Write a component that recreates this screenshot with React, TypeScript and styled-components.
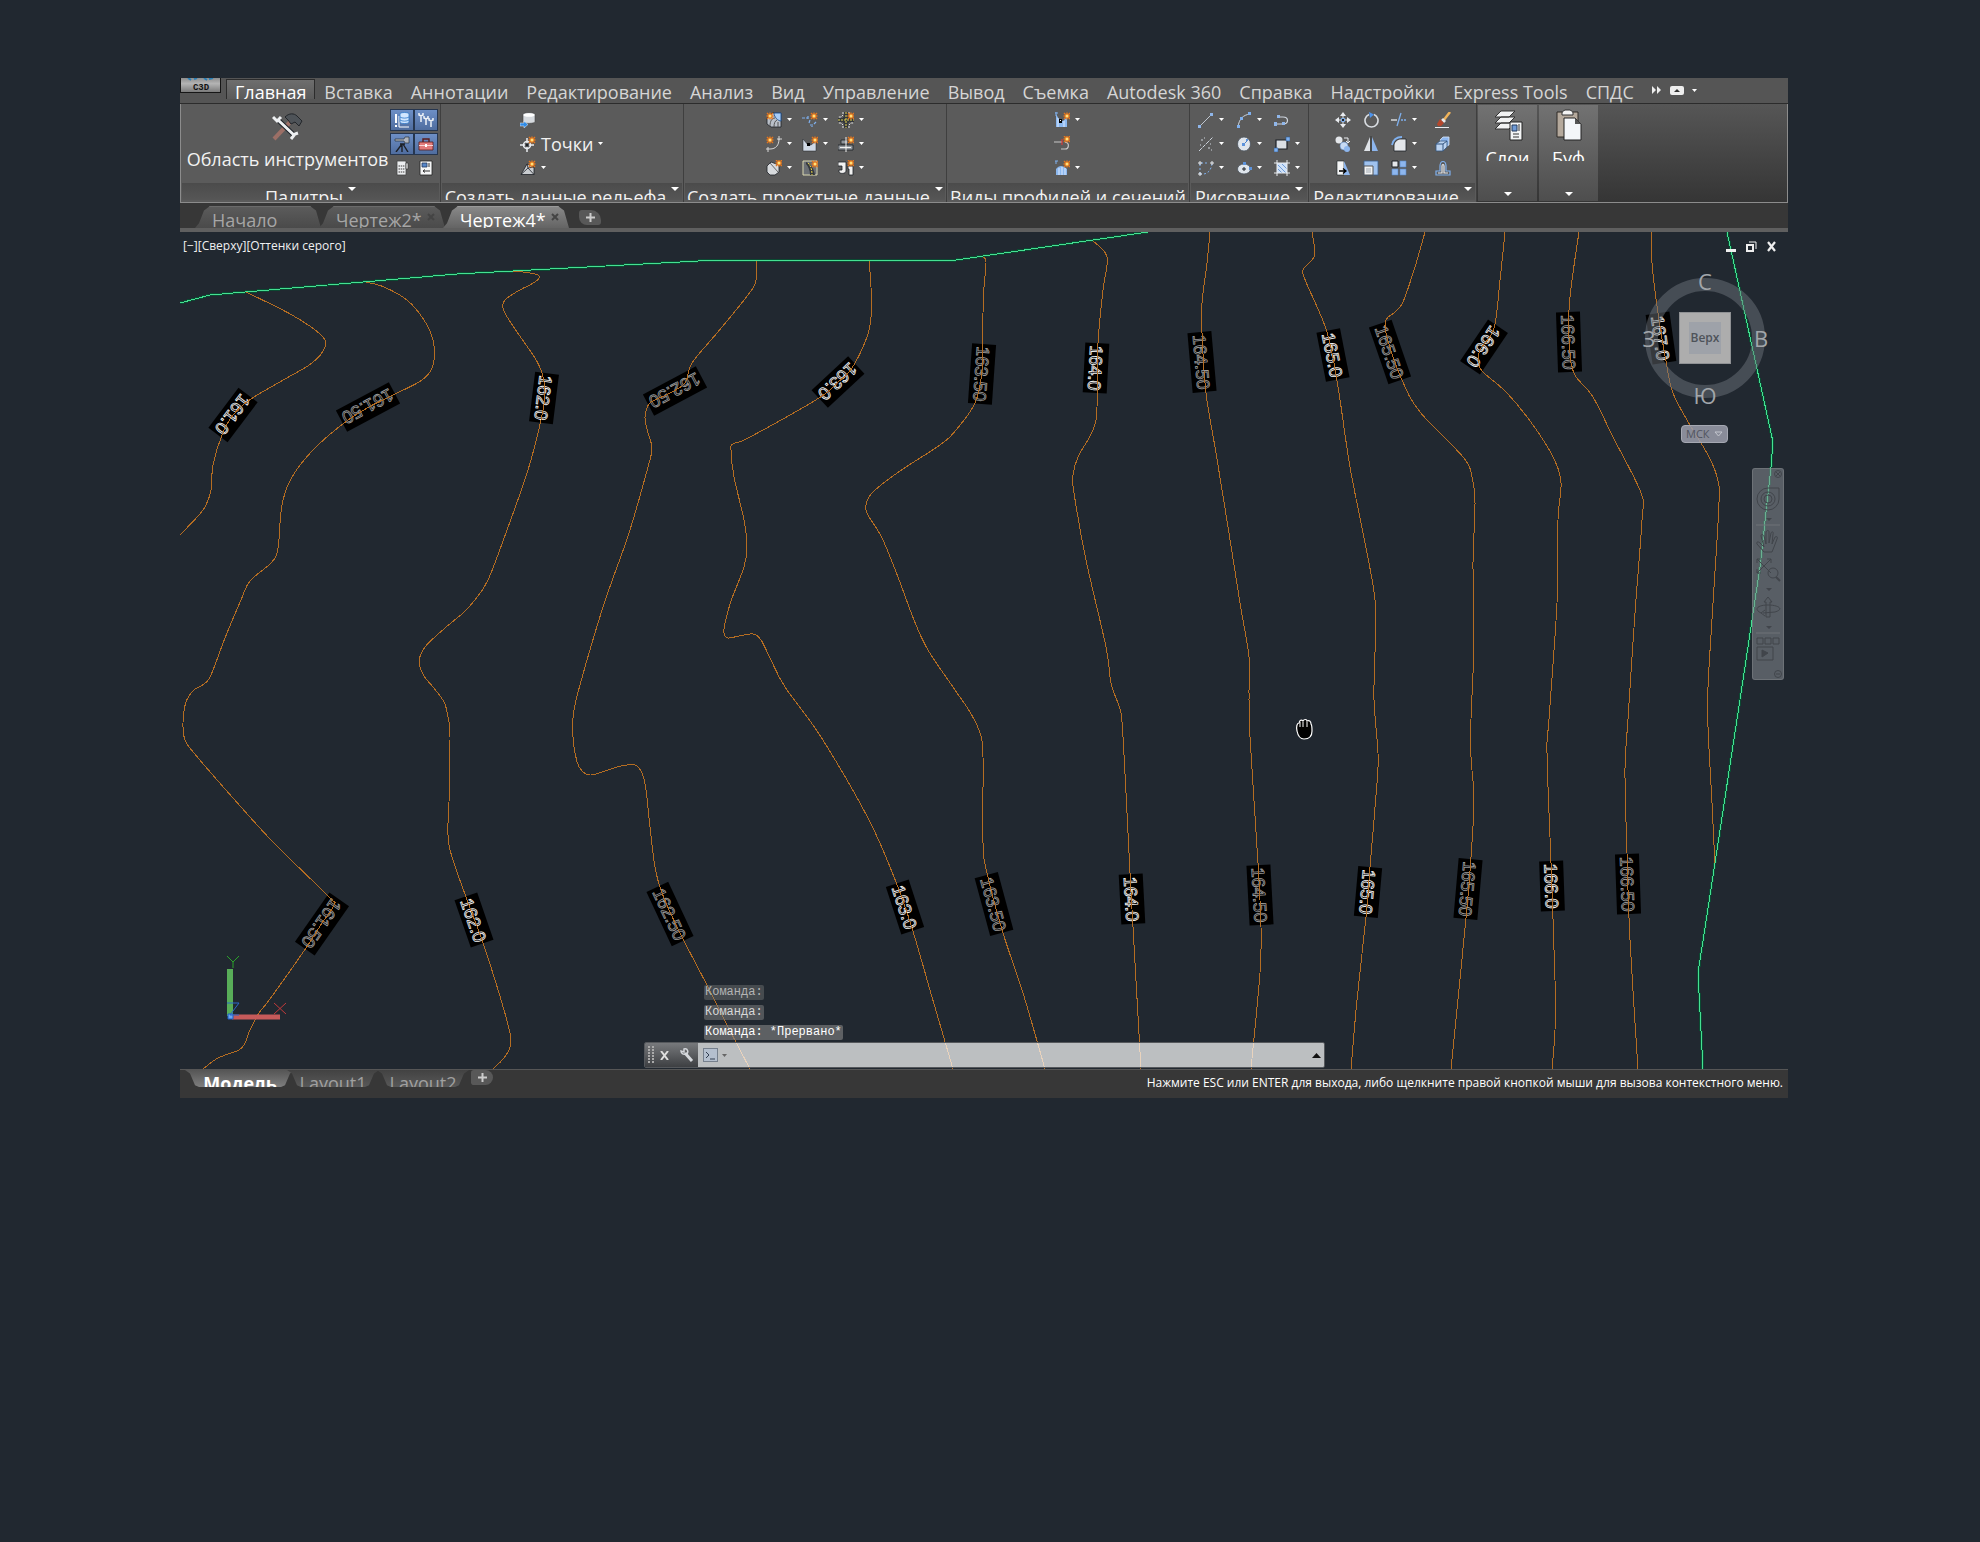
import React from 'react';
import styled, { createGlobalStyle, css } from 'styled-components';

const ui = `"Open Sans", "Noto Sans", sans-serif`;
const mono = `"Liberation Mono", "DejaVu Sans Mono", monospace`;

const Global = createGlobalStyle`
  * { box-sizing: border-box; }
  body { margin: 0; background: #212830; font-family: ${ui}; }
  button, input { font: inherit; color: inherit; border: 0; padding: 0; margin: 0; background: none; }
  svg { display: block; flex: none; }
`;

const Page = styled.div`
  min-height: 100vh;
  padding: 78px 192px 0 180px;
  background: #212830;
`;
const Window = styled.main`
  display: flex;
  flex-direction: column;
`;

/* ---------- ribbon tabs ---------- */
const TabRow = styled.nav`
  display: flex;
  align-items: stretch;
  height: 26px;
  background: #555;
  border-bottom: 1px solid #2c2c2c;
  overflow: hidden;
`;
const AppButton = styled.button`
  display: flex;
  flex: none;
  align-items: flex-end;
  justify-content: center;
  width: 41px;
  height: 15px;
  margin-right: 5px;
  border: 1px solid #161616;
  border-top: 0;
  background: linear-gradient(#8d8d8d, #b4b4b4 40%, #7a7a7a);
`;
const RibbonTab = styled.button<{ $active?: boolean }>`
  flex: none;
  height: 25px;
  padding: 1px 8px 0;
  border: 1px solid transparent;
  border-bottom: 0;
  color: #d6d6d6;
  font-size: 18px;
  line-height: 20px;
  white-space: nowrap;
  ${p => p.$active && css`
    height: 20px;
    margin-top: 1px;
    padding-top: 2px;
    color: #fff;
    border-color: #2c2c2c;
    background: linear-gradient(#6e6e6e, #5a5a5a);
  `}
`;
const TabExtras = styled.div`
  display: flex;
  align-items: center;
  gap: 8px;
  padding-left: 9px;
`;

/* ---------- ribbon ---------- */
const Ribbon = styled.section`
  display: flex;
  height: 99px;
  border: 1px solid #8c8c8c;
  border-top: 0;
  background: linear-gradient(#565656, #353535);
  overflow: hidden;
`;
const Panel = styled.section<{ $width: number }>`
  display: flex;
  flex: none;
  flex-direction: column;
  width: ${p => p.$width}px;
  border-right: 1px solid #3f3f3f;
  background: #5b5b5b;
`;
const PanelBody = styled.div`
  display: flex;
  align-items: center;
  justify-content: center;
  height: 79px;
`;
const PanelTitle = styled.h2`
  display: flex;
  justify-content: center;
  gap: 5px;
  height: 17px;
  margin: 0 1px;
  padding-top: 4px;
  background: linear-gradient(#4b4b4b, #565656);
  color: #f2f2f2;
  font-size: 18px;
  font-weight: 400;
  line-height: 20px;
  white-space: nowrap;
  overflow: hidden;
`;
const BigTool = styled.button`
  display: flex;
  flex-direction: column;
  align-items: center;
  gap: 6px;
  padding: 0 0 4px 4px;
  color: #f2f2f2;
  font-size: 18px;
  line-height: 24px;
  white-space: nowrap;
`;
const ToolPalette = styled.div`
  display: grid;
  grid-template-columns: 24px 24px;
  grid-auto-rows: 22px;
  row-gap: 2px;
  margin-left: 2px;
`;
const PaletteButton = styled.button<{ $on?: boolean }>`
  display: flex;
  align-items: center;
  justify-content: center;
  ${p => p.$on && css`
    border: 1px solid #26364f;
    background: linear-gradient(#6d8fc6, #4f6d9f);
  `}
`;
const ToolGrid = styled.div<{ $columns: string; $gap: number }>`
  display: grid;
  grid-template-columns: ${p => p.$columns};
  grid-auto-rows: 16px;
  gap: 8px ${p => p.$gap}px;
`;
const Tool = styled.button`
  display: flex;
  align-items: center;
  gap: 5px;
  height: 16px;
  color: #f2f2f2;
  font-size: 18px;
  line-height: 16px;
  white-space: nowrap;
`;
const Collapsed = styled.button`
  display: flex;
  flex: none;
  flex-direction: column;
  align-items: center;
  width: 59px;
  height: 96px;
  margin: 1px 1px 0;
  padding-top: 4px;
  background: linear-gradient(#727272, #4e4e4e);
  color: #fff;
  font-size: 18px;
`;
const CollapsedLabel = styled.span`
  height: 12px;
  margin: 8px 0 31px;
  line-height: 18px;
  overflow: hidden;
`;

/* ---------- file tabs ---------- */
const FileTabs = styled.nav`
  display: flex;
  align-items: flex-end;
  height: 29px;
  padding-left: 15px;
  background: #373737;
  border-bottom: 4px solid #5f5f5f;
  overflow: hidden;
`;
const FileTab = styled.button<{ $active?: boolean }>`
  display: flex;
  align-items: center;
  justify-content: space-between;
  width: 126px;
  height: 22px;
  margin-right: -2px;
  padding: 6px 10px 0 17px;
  background: ${p => (p.$active ? 'linear-gradient(#8a8a8a, #646464)' : 'linear-gradient(#5c5c5c, #4a4a4a)')};
  box-shadow: inset 0 1px 0 ${p => (p.$active ? '#9a9a9a' : '#6b6b6b')};
  color: ${p => (p.$active ? '#fff' : '#a6a6a6')};
  font-size: 18px;
  line-height: 20px;
  white-space: nowrap;
  overflow: hidden;
  clip-path: polygon(0 100%, 4px 78%, 9px 20%, 15px 0, 115px 0, 121px 20%, 126px 100%);
  svg { margin-bottom: 6px; }
`;
const PlusTab = styled.button<{ $flip?: boolean }>`
  display: flex;
  align-items: center;
  justify-content: center;
  align-self: ${p => (p.$flip ? 'flex-start' : 'center')};
  width: 22px;
  height: 15px;
  margin: ${p => (p.$flip ? '0 0 0 4px' : '4px 0 0 12px')};
  border-radius: ${p => (p.$flip ? '3px 8px 8px 3px' : '3px 10px 3px 8px')};
  background: #585858;
`;

/* ---------- drawing area ---------- */
const Canvas = styled.section`
  position: relative;
  overflow: hidden;
`;
const Plan = styled.svg`
  display: block;
  width: 100%;
  height: auto;
`;
const ViewLabel = styled.div`
  position: absolute;
  top: 6px;
  left: 3px;
  color: #f0f0f0;
  font-size: 12px;
  line-height: 16px;
`;
const ViewWindowButtons = styled.div`
  position: absolute;
  top: 9px;
  right: 11px;
  display: flex;
  gap: 9px;
`;
const CubeArea = styled.div`
  position: absolute;
  top: 35px;
  right: 16px;
  display: grid;
  grid-template-columns: 22px 90px 22px;
  grid-template-rows: 28px 86px 28px;
  place-items: center;
  width: 134px;
`;
const CubeRing = styled.div`
  position: absolute;
  top: 11px;
  left: 7px;
  width: 120px;
  height: 120px;
  border: 13px solid rgba(107, 113, 122, 0.5);
  border-radius: 50%;
`;
const Compass = styled.span<{ $area: string }>`
  position: relative;
  grid-area: ${p => p.$area};
  color: #a2a6aa;
  font-size: 22px;
  line-height: 28px;
`;
const Cube = styled.button`
  position: relative;
  grid-area: 2 / 2;
  width: 52px;
  height: 52px;
  border: 1px solid #8f9194;
  background: linear-gradient(#9ea2a9, #9ea2a9) center / 32px 32px no-repeat #adadad;
  color: #4e535a;
  font-size: 12px;
  font-weight: 600;
  line-height: 50px;
`;
const UcsPicker = styled.button`
  position: absolute;
  top: 193px;
  right: 60px;
  display: flex;
  align-items: center;
  justify-content: space-between;
  width: 47px;
  height: 18px;
  padding: 0 4px;
  border: 1px solid #a5a8b2;
  border-radius: 4px;
  background: rgba(155, 158, 172, 0.85);
  color: #50545e;
  font-size: 11px;
  line-height: 14px;
`;
const NavBar = styled.div`
  position: absolute;
  top: 236px;
  right: 4px;
  display: flex;
  flex-direction: column;
  align-items: center;
  width: 32px;
  height: 212px;
  border: 1px solid rgba(130, 133, 138, 0.5);
  border-radius: 3px;
  background: rgba(135, 139, 146, 0.55);
`;
const CommandArea = styled.div`
  position: absolute;
  left: 464px;
  bottom: 1px;
  display: flex;
  flex-direction: column;
  align-items: flex-start;
  gap: 5px;
  width: 681px;
`;
const History = styled.output<{ $tone: number }>`
  margin-left: 60px;
  padding: 0 1px;
  border-radius: 2px;
  background: rgba(128, 128, 128, ${p => 0.4 + p.$tone * 0.12});
  color: ${p => ['#b4b4b4', '#d8d8d8', '#fff'][p.$tone]};
  font-family: ${mono};
  font-size: 12px;
  line-height: 15px;
  white-space: pre;
`;
const CommandBar = styled.div`
  display: flex;
  width: 100%;
  height: 26px;
  margin-top: -3px;
  border: 1px solid #55585c;
  border-radius: 2px;
  overflow: hidden;
`;
const CommandGrip = styled.div`
  display: flex;
  flex: none;
  align-items: center;
  justify-content: space-between;
  width: 53px;
  padding: 0 4px 0 3px;
  background: linear-gradient(#77797c, #3d3f42);
`;
const GripStart = styled.div`
  display: flex;
  align-items: center;
  gap: 6px;
`;
const CommandField = styled.label`
  display: flex;
  flex: 1;
  align-items: center;
  gap: 4px;
  padding: 0 3px 0 5px;
  background: rgba(255, 255, 255, 0.7);
`;
const CommandInput = styled.input`
  flex: 1;
  min-width: 0;
  color: #222;
  font-family: ${mono};
  font-size: 12px;
  outline: none;
`;

/* ---------- status row ---------- */
const StatusRow = styled.footer`
  display: flex;
  justify-content: space-between;
  height: 29px;
  padding: 0 5px;
  border-top: 1px solid #565656;
  background: #373737;
`;
const LayoutTabs = styled.nav`
  display: flex;
  align-items: flex-start;
`;
const LayoutTab = styled.button<{ $active?: boolean }>`
  display: flex;
  justify-content: center;
  width: ${p => (p.$active ? 110 : 92)}px;
  height: 17px;
  margin-right: ${p => (p.$active ? -8 : -2)}px;
  padding-top: 3px;
  background: ${p => (p.$active ? 'linear-gradient(#555, #7e7e7e)' : 'linear-gradient(#424242, #585858)')};
  clip-path: polygon(0 0, 100% 0, calc(100% - 5px) 20%, calc(100% - 10px) 90%, calc(100% - 14px) 100%, 14px 100%, 10px 90%, 5px 20%);
  color: ${p => (p.$active ? '#fff' : '#a0a0a0')};
  font-size: 18px;
  font-weight: ${p => (p.$active ? 700 : 400)};
  line-height: 20px;
  overflow: hidden;
`;
const Hint = styled.p`
  margin: 0;
  color: #fff;
  font-size: 12px;
  line-height: 26px;
  white-space: nowrap;
`;

/* ---------- glyphs ---------- */
const Arrow = ({ w = 5, color = '#fff', up = false }: { w?: number; color?: string; up?: boolean }) => (
  <svg width={w} height={Math.ceil(w / 2)} viewBox="0 0 10 5" preserveAspectRatio="none">
    <path d={up ? 'M0 5h10L5 0z' : 'M0 0h10L5 5z'} fill={color} />
  </svg>
);
const Plus = () => (
  <svg width="9" height="9" viewBox="0 0 9 9"><path d="M4.500 0v9M0 4.500h9" stroke="#ccc" strokeWidth="2" /></svg>
);
const Spark = ({ x, y }: { x: number; y: number }) => (
  <g transform={`translate(${x} ${y})`}>
    <path d="M-3-3l6 6M3-3l-6 6M0-3.5v7M-3.5 0h7" stroke="#e5761c" strokeWidth="1.4" />
    <circle r="1.5" fill="#ffe07a" />
  </g>
);

const B = '#7fb0ee';
const W = '#e9ecf0';
const K = '#1d2127';
const icons: Record<string, React.ReactNode> = {
  survey: <><path d="M3 2.500c0-2.500 12-2.500 12 0v7c0 2.500-12 2.500-12 0z" fill="#d5d9de" stroke="#444" strokeWidth=".6" /><ellipse cx="9" cy="3" rx="5.500" ry="1.800" fill="#fff" /><path d="M0 11h4V9l4 3.500-4 3.500v-2H0z" fill="#2f8be6" stroke="#e8f2ff" strokeWidth=".5" /></>,
  points: <><circle cx="7" cy="9" r="3.500" fill="none" stroke={W} strokeWidth="1.500" /><path d="M7 2v5M7 11v5M0 9h5M9 9h5" stroke={W} strokeWidth="1.500" /><circle cx="7" cy="9" r="1.200" fill={K} /><Spark x={12} y={4} /></>,
  surface: <><path d="M1 14.500L7 4l7 3v7.500z" fill="#c9ccd0" stroke={K} strokeWidth=".8" /><path d="M1 14.500L8 8l6 6.500M8 8L7 4M8 8l6-1" stroke={K} strokeWidth=".8" fill="none" /><Spark x={12} y={4} /></>,
  parcel: <><path d="M1 6l5-5h9v14H5l-4-3z" fill="#b9bfc8" stroke={K} strokeWidth=".8" /><path d="M8 1h7v8c-3 0-7-4-7-8z" fill="#a9cdf6" stroke="#2d5b96" /><path d="M4 14c0-5 2-8 5-8M8 15c0-4 1-6 3-7M12 15v-5" stroke="#555" fill="none" /><Spark x={4} y={4} /></>,
  feature: <><path d="M0 6h3M4 6h2M8 8l-1 3M8 13h3M12 12l2-2M6 4v3M10 14v1" stroke={B} strokeWidth="1.200" /><Spark x={12} y={4} /></>,
  cross: <><path d="M5 5h6v6H5zM0 6h5v4H0zM11 6h5v4h-5zM6 0h4v5H6zM6 11h4v5H6z" fill="#34383d" /><path d="M5 0v3L3 5H0M11 0v3l2 2h3M5 16v-3l-2-2H0M11 16v-3l2-2h3" stroke="#e2e2e2" strokeDasharray="2 1" /><path d="M8 0v16M0 8h16" stroke="#e7d44c" strokeDasharray="2 1" /><Spark x={13} y={4} /></>,
  align: <><path d="M0 13h4c6 0 9-4 9-10M2 11v5M11 3h5M13 0v4" stroke="#d8d8d8" fill="none" /><Spark x={4} y={4} /></>,
  profile: <><path d="M1 3l5 6h3l5-4v10H1z" fill="#cfd8e4" stroke={K} strokeWidth=".5" /><path d="M5 7h3v3H5z" fill="#000" /><Spark x={13} y={4} /></>,
  assembly: <><path d="M3 4h7v4H3zM0 9h15v5H0z" fill="#8f949a" stroke={K} strokeWidth=".8" /><path d="M8 1v15M2 11.500h11" stroke="#f0f0f0" /><Spark x={13} y={4} /></>,
  grading: <><path d="M1 6l4-4 8 3v7l-4 3H4l-3-3z" fill="#d7dadd" stroke={K} strokeWidth=".8" /><path d="M4 3l8 9" stroke="#666" /><Spark x={13} y={3} /></>,
  corridor: <><path d="M1 1h14v14H1z" fill="#6b6f74" stroke="#dcd9b0" /><path d="M4 2c5 2 8 7 9 13H8c0-5-2-9-4-11z" fill="#34383d" /><path d="M6 3c3 3 4 7 4 12" stroke="#f1db45" strokeDasharray="2 1" fill="none" /><Spark x={13} y={4} /></>,
  pipe: <><path d="M0 2h8v9c0 3-6 3-7 1v-2h3V6H0zM10 6h5v9h-4V9h-1z" fill="#f1f1f1" stroke={K} strokeWidth=".8" /><Spark x={13} y={3} /></>,
  profileView: <><path d="M2 2v13h11V5L9 9H6z" fill="#8cb8ef" /><path d="M4 6v9M10 9v6" stroke="#dceaff" /><path d="M2 0v4M4 1H1" stroke={B} /><path d="M5 7h3v4H5z" fill="#000" /><path d="M6 8h1v1H6z" fill="#fff" /><Spark x={13} y={4} /></>,
  sampleLines: <><path d="M0 6h8M11 6c5 1 4 7 0 7H7" stroke="#c7c7c7" fill="none" strokeWidth="1.200" /><path d="M8 3v6" stroke="#e33" /><Spark x={13} y={3} /></>,
  sectionView: <><path d="M2 15V9c3-4 7-4 11 0v6z" fill="#8cb8ef" /><path d="M5 15V8M8 15V7M11 15V8" stroke="#dceaff" /><path d="M2 1v3M4 1H1" stroke={B} /><Spark x={13} y={4} /></>,
  line: <><path d="M1 15L14 2" stroke="#bfc6cf" /><path d="M0 13h3v3H0zM12 1h3v3h-3z" fill="#8fb6ea" /></>,
  arc: <><path d="M2 15C3 7 7 3 14 2" stroke="#cfd6df" fill="none" /><path d="M1 13h3v3H1zM4 5h3v3H4zM12 0h3v3h-3z" fill={B} /></>,
  polyline: <><path d="M2 12h7c6 0 6-7 0-7H4" stroke="#cfd6df" fill="none" strokeWidth="1.200" /><path d="M0 10h3v4H0zM8 10h3v3H8zM3 3h3v3H3z" fill="#8fb6ea" /></>,
  cline: <><path d="M1 15L15 1" stroke="#cfd6df" strokeDasharray="4 1" /><path d="M3 4h2M10 12h2M12 8h1M6 2h1M2 9h1M13 14h1" stroke="#cfd6df" /></>,
  circle: <><ellipse cx="8" cy="8" rx="6.500" ry="7" fill="#dfe5ec" stroke="#4d5560" strokeWidth=".8" /><path d="M8 8l3-3" stroke="#4c7fc2" /><path d="M6 7h3v3H6zM10 3h2v2h-2z" fill="#5d93db" /></>,
  rect: <><path d="M2 4h11v9H2z" fill="#d9dee4" stroke={K} strokeWidth="1.200" /><path d="M0 12h4v4H0zM12 1h4v4h-4z" fill="#7fb0ee" stroke="#2d5b96" strokeWidth=".6" /></>,
  fillet: <><path d="M2 14V3h8M2 14h3c5 0 8-4 9-10" stroke={B} strokeDasharray="2 2" fill="none" /><path d="M0 3h4M2 1v4M0 14h4M2 12v4M12 3h4M14 1v4" stroke={W} /></>,
  ellipse: <><ellipse cx="8" cy="9" rx="6.500" ry="5" fill="#dfe5ec" stroke="#4d5560" strokeWidth=".8" /><path d="M6 9h4M8 7v4" stroke={K} /><path d="M7 2h3v3H7zM13 7h3v3h-3z" fill="#5d93db" /></>,
  hatch: <><path d="M3 3h10v10H3z" fill="#cfe1f8" /><path d="M4 9l4 4M4 5l8 8M8 4l5 5" stroke="#6f9cd8" /><path d="M3 0v16M13 0v16M0 3h16M0 13h16" stroke={W} /></>,
  move: <><path d="M8 0l3 4H5zM8 16l3-4H5zM0 8l4-3v6zM16 8l-4-3v6z" fill={W} /><path d="M8 3v3M8 10v3M3 8h3M10 8h3" stroke={W} /><path d="M6.500 6.500h3v3h-3z" fill={K} stroke={B} /></>,
  rotate: <><path d="M11 2.500a6.500 6.500 0 1 1-5 0" stroke="#d9dde2" strokeWidth="1.600" fill="none" /><path d="M6 0l5 2.500L7 6z" fill="#4e94ec" /></>,
  trim: <><path d="M0 8h6" stroke={W} strokeWidth="1.300" /><path d="M10 8h6" stroke={B} strokeDasharray="2 1" strokeWidth="1.300" /><path d="M10 1L6 14" stroke={B} strokeWidth="1.300" /></>,
  erase: <><path d="M15 0L8 9" stroke="#f0b35a" strokeWidth="2.500" /><path d="M8 6l3 3-2 2-3-3z" fill="#e8e8e8" /><path d="M2 12l3-5 4 4-3 3H3z" fill="#b5472c" /><path d="M0 15.500h14" stroke={W} /></>,
  copy: <><circle cx="4" cy="4" r="3.500" fill="#e4e7eb" /><circle cx="9" cy="10" r="4" fill="#c7daf4" stroke="#4e7fc0" strokeWidth=".5" /><circle cx="12" cy="13" r="3" fill="#8db6ee" /><path d="M9 2h4v4M11 5l2 2 2-2" stroke={W} fill="none" /></>,
  mirror: <><path d="M7 1v14H1z" fill="#dfe3e8" /><path d="M9 1v14h6z" fill="#8db6ee" /><path d="M8 0v16" stroke={K} strokeWidth=".6" /></>,
  chamfer: <><path d="M3 15V9c0-3 4-6 6-6h6v12z" fill="#e4e7eb" stroke={K} strokeWidth=".8" /><path d="M1 9c1-5 4-8 10-8" stroke={B} strokeWidth="1.800" fill="none" /></>,
  explode: <><path d="M5 4l3-3h6v8l-4 2z" fill="#8db6ee" stroke="#d9e6f8" strokeWidth=".8" /><path d="M1 8l4-3h7v6l-4 4H1z" fill="#bcd3f0" stroke="#33557f" strokeWidth=".8" /><path d="M1 8h7v7M8 8l4-3" stroke="#33557f" fill="none" /></>,
  stretch: <><path d="M2 1h7v14H2z" fill="#f4f5f6" stroke={K} strokeWidth=".6" /><path d="M9 1l6 14H9z" fill="#8db6ee" /><path d="M4 11h6M8 8.500l3 2.500-3 2.500" stroke="#000" strokeWidth="1.300" fill="none" /></>,
  scale: <><path d="M1 1h14v14H1z" fill="#9fc2ef" stroke="#3b5f8f" strokeWidth=".8" /><path d="M1 6h9v9H1z" fill="#f0f2f4" stroke="#555" /><path d="M3 8h5v5H3z" fill="#c9cdd2" /></>,
  array: <><path d="M1 1h6v6H1z" fill="#e4e7eb" stroke={K} /><path d="M9 1h6v6H9zM1 9h6v6H1zM9 9h6v6H9z" fill="#8db6ee" stroke="#5b8ac8" strokeWidth=".6" /></>,
  offset: <><path d="M1 15h14v-4h-4V6c0-6-6-6-6 0v5H1z" fill="none" stroke={B} strokeWidth="1.200" /><path d="M3 13h4V6c0-2 2-2 2 0v7h4" stroke={W} strokeWidth="1.200" fill="none" /></>,
  toolspace: <><path d="M1 2h2v9H1zM1 13h2v2H1z" fill="#fff" /><path d="M5 4v11h10" stroke="#fff" fill="none" /><path d="M6 2c0-2 9-2 9 0v8c0 2-9 2-9 0z" fill="#d2e6ff" stroke="#2f78c9" strokeWidth=".8" /><path d="M6 5c2 1.500 7 1.500 9 0M6 8c2 1.500 7 1.500 9 0" stroke="#2f78c9" fill="none" strokeWidth=".8" /></>,
  wrenches: <path d="M1 1v2l2 1 2-1V1M3 4v6M6 4v2l2 1 2-1V4M8 7v6M11 6v2l2 1 2-1V6M13 9v6" stroke="#eef2f7" strokeWidth="1.500" fill="none" />,
  tripod: <><path d="M1 3h9l1-2h4v6h-4l-1-2H1z" fill="#aeb4bd" stroke={K} strokeWidth=".6" /><path d="M8 8l-6 8M8 8v8M9 8l5 8M6 8h5" stroke={K} strokeWidth="1.400" /></>,
  toolbox: <><path d="M1 6h14v8H1z" fill="#e07a7a" stroke="#5c1c1c" strokeWidth=".8" /><path d="M5 6V3h6v3" stroke="#5c1c1c" strokeWidth="1.400" fill="none" /><path d="M1 9.500h14" stroke="#f7d3d3" /><path d="M7 8h2v3H7z" fill="#fff" /></>,
  calc: <><path d="M3 1h9v14H3z" fill="#eceef0" stroke="#444" strokeWidth=".8" /><path d="M12 3h2v6h-2z" fill="#eee" stroke="#333" strokeWidth=".7" /><path d="M4.500 6h6M4.500 9h6M4.500 12h6" stroke="#777" strokeDasharray="1.500 .7" strokeWidth="1.500" /></>,
  props: <><path d="M2 1h12v14H2z" fill="#f4f5f6" stroke="#222" strokeWidth=".8" /><path d="M4 3h5v4H4z" fill="#5586c9" stroke="#23395a" strokeWidth=".8" /><path d="M11 3v4M5 11h7M7 9.500L5 11l2 1.500" stroke="#333" fill="none" /></>,
};
const Icon = ({ name }: { name: string }) => (
  <svg width="16" height="16" viewBox="0 0 16 16" fill="none">{icons[name]}</svg>
);

type Item = { icon: string; menu?: boolean; text?: string };
const ToolItem = ({ icon, menu, text }: Item) => (
  <Tool aria-label={text ? undefined : icon}>
    <Icon name={icon} />
    {text}
    {menu && <Arrow />}
  </Tool>
);
const RibbonPanel = ({ width, title, menu, children }: { width: number; title: string; menu?: boolean; children: React.ReactNode }) => (
  <Panel $width={width}>
    <PanelBody>{children}</PanelBody>
    <PanelTitle>{title}{menu && <Arrow w={8} />}</PanelTitle>
  </Panel>
);

const tabs = ['Главная', 'Вставка', 'Аннотации', 'Редактирование', 'Анализ', 'Вид', 'Управление', 'Вывод', 'Съемка', 'Autodesk 360', 'Справка', 'Надстройки', 'Express Tools', 'СПДС'];

const terrain: Item[] = [{ icon: 'survey' }, { icon: 'points', text: 'Точки', menu: true }, { icon: 'surface', menu: true }];
const design: Item[] = [
  { icon: 'parcel', menu: true }, { icon: 'feature', menu: true }, { icon: 'cross', menu: true },
  { icon: 'align', menu: true }, { icon: 'profile', menu: true }, { icon: 'assembly', menu: true },
  { icon: 'grading', menu: true }, { icon: 'corridor' }, { icon: 'pipe', menu: true },
];
const views: Item[] = [{ icon: 'profileView', menu: true }, { icon: 'sampleLines' }, { icon: 'sectionView', menu: true }];
const draw: Item[] = [
  { icon: 'line', menu: true }, { icon: 'arc', menu: true }, { icon: 'polyline' },
  { icon: 'cline', menu: true }, { icon: 'circle', menu: true }, { icon: 'rect', menu: true },
  { icon: 'fillet', menu: true }, { icon: 'ellipse', menu: true }, { icon: 'hatch', menu: true },
];
const modify: Item[] = [
  { icon: 'move' }, { icon: 'rotate' }, { icon: 'trim', menu: true }, { icon: 'erase' },
  { icon: 'copy' }, { icon: 'mirror' }, { icon: 'chamfer', menu: true }, { icon: 'explode' },
  { icon: 'stretch' }, { icon: 'scale' }, { icon: 'array', menu: true }, { icon: 'offset' },
];

/* ---------- plan data (drawing units) ---------- */
type Pt = [number, number];
const contours: Pt[][] = [
  [[246, 292], [292, 315], [321, 335], [325, 347], [312, 363], [285, 379], [251, 399], [233, 415], [222, 435], [213, 465], [211, 490], [206, 505], [199, 515], [180, 535]],
  [[366, 282], [384, 287], [407, 300], [424, 320], [433, 340], [434, 360], [430, 372], [419, 382], [393, 395], [369, 407], [344, 423], [313, 450], [292, 477], [283, 500], [280, 523], [278, 548], [272, 562], [250, 581], [241, 600], [225, 638], [211, 675], [204, 684], [194, 690], [186, 702], [183, 723], [185, 740], [194, 753], [233, 798], [273, 842], [328, 896], [334, 905], [322, 923], [306, 948], [270, 999], [259, 1013], [250, 1030], [245, 1043], [239, 1050], [218, 1058], [203, 1069]],
  [[513, 271], [530, 273], [539, 276], [535, 282], [518, 291], [505, 300], [503, 308], [509, 320], [524, 342], [535, 358], [542, 373], [545, 393], [541, 420], [528, 470], [507, 530], [488, 580], [474, 601], [463, 613], [445, 628], [425, 647], [419, 662], [424, 676], [433, 687], [444, 702], [448, 717], [450, 737], [449, 803], [449, 845], [466, 897], [482, 940], [499, 993], [510, 1033], [510, 1047], [504, 1058], [493, 1069]],
  [[756, 260], [756, 280], [748, 295], [717, 333], [692, 363], [685, 383], [668, 394], [650, 403], [645, 417], [648, 433], [652, 448], [648, 467], [629, 533], [605, 601], [585, 667], [574, 710], [573, 737], [577, 762], [583, 772], [591, 775], [605, 771], [621, 766], [635, 765], [642, 773], [646, 790], [650, 827], [655, 867], [662, 893], [680, 933], [708, 987], [726, 1023], [750, 1069]],
  [[869, 261], [871, 287], [871, 317], [867, 337], [852, 368], [837, 383], [819, 398], [750, 437], [733, 444], [731, 450], [734, 477], [744, 520], [747, 547], [744, 567], [731, 601], [725, 623], [724, 633], [728, 638], [739, 636], [753, 634], [761, 640], [771, 660], [785, 687], [821, 737], [869, 820], [896, 882], [912, 928], [932, 997], [953, 1069]],
  [[983, 257], [986, 262], [984, 287], [983, 313], [982, 370], [975, 403], [956, 430], [940, 445], [900, 471], [873, 492], [866, 505], [868, 515], [882, 538], [898, 577], [914, 620], [928, 650], [955, 690], [970, 712], [980, 733], [983, 757], [983, 843], [987, 873], [1003, 933], [1023, 993], [1045, 1069]],
  [[1093, 241], [1107, 257], [1103, 290], [1098, 343], [1097, 407], [1093, 430], [1078, 457], [1073, 475], [1074, 493], [1086, 560], [1106, 647], [1111, 683], [1119, 706], [1122, 722], [1126, 793], [1130, 873], [1133, 927], [1141, 1069]],
  [[1210, 232], [1207, 263], [1202, 303], [1202, 333], [1206, 393], [1216, 453], [1228, 527], [1240, 603], [1249, 657], [1249, 693], [1250, 737], [1258, 863], [1261, 927], [1260, 973], [1251, 1069]],
  [[1312, 232], [1315, 252], [1312, 260], [1303, 270], [1306, 282], [1327, 332], [1338, 387], [1350, 467], [1365, 543], [1375, 600], [1375, 653], [1374, 700], [1378, 753], [1377, 783], [1370, 867], [1366, 917], [1357, 1000], [1351, 1069]],
  [[1425, 232], [1415, 267], [1403, 302], [1395, 312], [1386, 320], [1387, 337], [1402, 380], [1420, 412], [1463, 457], [1472, 477], [1475, 503], [1473, 563], [1474, 623], [1473, 673], [1471, 719], [1471, 757], [1474, 800], [1471, 857], [1466, 918], [1451, 1069]],
  [[1505, 232], [1500, 280], [1494, 328], [1480, 350], [1479, 363], [1483, 372], [1507, 393], [1533, 425], [1553, 457], [1561, 483], [1558, 520], [1557, 603], [1549, 719], [1547, 753], [1551, 863], [1555, 980], [1555, 1030], [1552, 1069]],
  [[1579, 232], [1573, 273], [1569, 310], [1570, 353], [1575, 375], [1593, 397], [1613, 437], [1641, 493], [1642, 520], [1635, 613], [1628, 719], [1625, 770], [1627, 853], [1630, 940], [1638, 1069]],
  [[1652, 232], [1652, 263], [1658, 313], [1667, 367], [1673, 393], [1687, 420], [1708, 455], [1717, 477], [1719, 503], [1713, 603], [1708, 687], [1708, 727], [1712, 803], [1715, 865]],
];
const boundary: Pt[][] = [
  [[180, 303], [210, 295], [457, 274], [717, 260], [829, 260], [956, 260], [1148, 232]],
  [[1727, 232], [1773, 442], [1771, 467], [1760, 567], [1743, 680], [1715, 863], [1698, 973], [1703, 1069]],
];
const marks: [string, number, number, number][] = [
  ['161.0', 233, 415, 127], ['161.50', 368, 407, 152], ['162.0', 544, 398, 97], ['162.50', 675, 391, 152],
  ['163.0', 838, 382, 137], ['163.50', 982, 374, 94], ['164.0', 1096, 368, 93], ['164.50', 1202, 362, 85],
  ['165.0', 1333, 355, 79], ['165.50', 1390, 352, 71], ['166.0', 1484, 347, 124], ['166.50', 1569, 342, 88],
  ['167.0', 1661, 338, 82],
  ['161.50', 322, 924, 125], ['162.0', 474, 920, 71], ['162.50', 670, 914, 65], ['163.0', 905, 907, 72],
  ['163.50', 994, 904, 75], ['164.0', 1132, 899, 87], ['164.50', 1260, 895, 87], ['165.0', 1368, 892, 95],
  ['165.50', 1468, 889, 95], ['166.0', 1552, 886, 88], ['166.50', 1628, 884, 88],
];

/* Catmull-Rom spline through the survey vertices */
const smooth = (p: Pt[]) =>
  p.slice(1).reduce((d, c, i) => {
    const a = p[Math.max(i - 1, 0)], b = p[i], e = p[Math.min(i + 2, p.length - 1)];
    return `${d}C${b[0] + (c[0] - a[0]) / 6} ${b[1] + (c[1] - a[1]) / 6} ${c[0] - (e[0] - b[0]) / 6} ${c[1] - (e[1] - b[1]) / 6} ${c[0]} ${c[1]}`;
  }, `M${p[0][0]} ${p[0][1]}`);

const Drawing = () => (
  <Plan viewBox="180 232 1608 837">
    {marks.map(([text, x, y, angle]) => {
      const major = text.length === 5;
      const w = major ? 50 : 60;
      return (
        <g key={`${x}-${y}`} transform={`translate(${x} ${y}) rotate(${angle})`}>
          <rect x={-w / 2} y={-12} width={w} height={24} fill="#000" />
          <text x="0" y="7" textAnchor="middle" fontFamily="Liberation Sans, sans-serif" fontSize="18" fill="#000" stroke={major ? '#f4f4f4' : '#9c9c9c'} strokeWidth="0.8">{text}</text>
        </g>
      );
    })}
    <g fill="none" shapeRendering="crispEdges">
      {boundary.map((b, i) => <polyline key={i} points={b.join(' ')} stroke="#0b4a32" strokeWidth="3" />)}
      {contours.map((c, i) => <path key={i} d={smooth(c)} stroke="#b56d22" />)}
      {boundary.map((b, i) => <polyline key={i} points={b.join(' ')} stroke="#45e092" />)}
    </g>
    <g fill="none">
      <path d="M230 1016V969" stroke="#58ad58" strokeWidth="6" />
      <path d="M232 1017H280" stroke="#c65a5a" strokeWidth="5" />
      <path d="M228 1014h5v5h-5z" fill="#6aa6f0" stroke="#1f5fc4" />
      <path d="M227 1003h12l-9 12h9" stroke="#2a67c9" />
      <path d="M227 956l6 6 6-6M233 962v6" stroke="#2ba32b" />
      <path d="M274 1003l12 11M286 1003l-12 11" stroke="#c03a3a" />
    </g>
    <path d="M1297 731c-1-4 0-8 2-8 1-4 3-3 4-2 1-2 4-2 4 0 2-1 4 0 4 3 1 1 1 4 1 7 0 6-4 8-8 8s-6-3-7-8z" fill="#000" stroke="#fff" strokeWidth="1.200" />
    <path d="M1300 722v5M1303 722v5M1307 722v5" stroke="#fff" />
  </Plan>
);

const NavIcons = () => (
  <svg width="30" height="210" viewBox="0 0 30 210" fill="none" stroke="#41454b" strokeWidth="1">
    <circle cx="25" cy="5" r="3.500" /><path d="M23 3l4 4M27 3l-4 4" />
    <path d="M15 19h11v11a11 11 0 1 1-11-11z" /><circle cx="15" cy="30" r="7" /><circle cx="15" cy="30" r="4" />
    <path d="M13 49h6l-3 3z" fill="#41454b" stroke="none" /><path d="M3 56h24M3 164h24" stroke="#6f7379" />
    <path d="M11 83l-7-8c-1-2 1-3 3-1l4 4-3-11c0-2 2-2 3 0l2 8V63c1-2 3-2 3 0v11l2-10c1-2 3-1 2 1l-1 10 3-7c2-1 3 0 2 2l-3 8-2 5z" />
    <path d="M4 90l14 14M18 90L4 104M4 94v-4h4M14 90h4v4M4 100v4h4" /><circle cx="20" cy="104" r="5" /><path d="M23 108l4 4" strokeWidth="2" />
    <path d="M13 119h6l-3 3zM13 157h6l-3 3z" fill="#41454b" stroke="none" />
    <path d="M13 148v-15h-2l4-5 4 5h-2v15zM8 144c-8-4-3-8 7-8s17 4 7 7l-12 1M12 141l-4 3 4 3" />
    <path d="M4 169h6v6H4zM12 169h6v6h-6zM20 169h6v6h-6zM4 178h16v13H4z" /><path d="M9 181l6 3-6 4z" fill="#41454b" />
    <circle cx="25" cy="205" r="3.500" /><path d="M23 205h4" />
  </svg>
);

export default function App() {
  return (
    <Page>
      <Global />
      <Window>
        <TabRow>
          <AppButton aria-label="C3D">
            <svg width="39" height="14" viewBox="0 0 39 14">
              <path d="M7 0l3 2M13 1l3-1M23 0l3 2M28 1l4-1" stroke="#2a7fb5" strokeWidth="2" />
              <text x="20" y="12" textAnchor="middle" fontFamily="Liberation Mono, monospace" fontWeight="700" fontSize="9" fill="#111">C3D</text>
            </svg>
          </AppButton>
          {tabs.map((t, i) => <RibbonTab key={t} $active={i === 0}>{t}</RibbonTab>)}
          <TabExtras>
            <svg width="10" height="9" viewBox="0 0 10 9"><path d="M0 0l4 4-4 4zM5 0l4 4-4 4z" fill="#eee" /></svg>
            <svg width="14" height="9" viewBox="0 0 14 9"><rect width="14" height="9" rx="2" fill="#eee" /><path d="M4 6h6L7 3z" fill="#333" /></svg>
            <Arrow />
          </TabExtras>
        </TabRow>

        <Ribbon>
          <RibbonPanel width={260} title="Палитры" menu>
            <BigTool>
              <svg width="31" height="28" viewBox="0 0 31 28" fill="none">
                <path d="M2 26L20 7" stroke="#9c6f66" strokeWidth="4" />
                <path d="M13 4c4-4 9-4 12-1l5 5-3 5-4-4-4 2-3-4z" fill="#4e5358" stroke="#23262a" />
                <path d="M5 6l18 17" stroke="#1d2127" strokeWidth="5" />
                <path d="M5 6l18 17M1 4l4 4 4-4M19 26l4-5 3-1" stroke="#eef0f2" strokeWidth="3" />
              </svg>
              Область инструментов
            </BigTool>
            <ToolPalette>
              {['toolspace', 'wrenches', 'tripod', 'toolbox', 'calc', 'props'].map((n, i) => (
                <PaletteButton key={n} $on={i < 4} aria-label={n}><Icon name={n} /></PaletteButton>
              ))}
            </ToolPalette>
          </RibbonPanel>
          <RibbonPanel width={243} title="Создать данные рельефа" menu>
            <ToolGrid $columns="84px" $gap={0}>{terrain.map(t => <ToolItem key={t.icon} {...t} />)}</ToolGrid>
          </RibbonPanel>
          <RibbonPanel width={263} title="Создать проектные данные" menu>
            <ToolGrid $columns="repeat(3, 26px)" $gap={10}>{design.map(t => <ToolItem key={t.icon} {...t} />)}</ToolGrid>
          </RibbonPanel>
          <RibbonPanel width={243} title="Виды профилей и сечений">
            <ToolGrid $columns="28px" $gap={0}>{views.map(t => <ToolItem key={t.icon} {...t} />)}</ToolGrid>
          </RibbonPanel>
          <RibbonPanel width={119} title="Рисование" menu>
            <ToolGrid $columns="repeat(3, 26px)" $gap={12}>{draw.map(t => <ToolItem key={t.icon} {...t} />)}</ToolGrid>
          </RibbonPanel>
          <RibbonPanel width={168} title="Редактирование" menu>
            <ToolGrid $columns="16px 16px 32px 16px" $gap={12}>{modify.map(t => <ToolItem key={t.icon} {...t} />)}</ToolGrid>
          </RibbonPanel>
          <Collapsed>
            <svg width="30" height="32" viewBox="0 0 30 32">
              <path d="M8 2h14l-6 6H2zM8 8h14l-6 6H2zM8 14h14l-6 6H2z" fill="#f1f2f3" stroke="#333" />
              <path d="M17 13h12v18H17z" fill="#f4f5f6" stroke="#222" />
              <path d="M19 16h5v6h-5z" fill="#6f9ad6" stroke="#23395a" /><path d="M26 15v7M20 25h6M20 28h6" stroke="#333" />
            </svg>
            <CollapsedLabel>Слои</CollapsedLabel>
            <Arrow w={8} />
          </Collapsed>
          <Collapsed>
            <svg width="26" height="32" viewBox="0 0 26 32">
              <path d="M1 3h21v25H1z" fill="#b5a99c" stroke="#2e2a26" />
              <path d="M6 4c0-2 2-2 3-3h5c1 1 3 1 3 3v2H6z" fill="#f3f3f3" stroke="#333" />
              <path d="M8 9h11l6 6v16H8z" fill="#f4f6f9" stroke="#222" /><path d="M19 9v6h6z" fill="#555" />
            </svg>
            <CollapsedLabel>Буф</CollapsedLabel>
            <Arrow w={8} />
          </Collapsed>
        </Ribbon>

        <FileTabs>
          <FileTab>Начало</FileTab>
          {['Чертеж2*', 'Чертеж4*'].map((t, i) => (
            <FileTab key={t} $active={i === 1}>
              {t}
              <svg width="8" height="8" viewBox="0 0 8 8"><path d="M1 1l6 6M7 1L1 7" stroke="#444" strokeWidth="2" /></svg>
            </FileTab>
          ))}
          <PlusTab aria-label="Новый чертеж"><Plus /></PlusTab>
        </FileTabs>

        <Canvas>
          <Drawing />
          <ViewLabel>[−][Сверху][Оттенки серого]</ViewLabel>
          <ViewWindowButtons>
            <button aria-label="Свернуть"><svg width="11" height="11" viewBox="0 0 11 11"><path d="M0 8h10v3H0z" fill="#eee" /></svg></button>
            <button aria-label="Восстановить"><svg width="11" height="11" viewBox="0 0 11 11" fill="none" stroke="#eee"><path d="M1 4h6v6H1z" strokeWidth="2" /><path d="M3 1h7v7" /></svg></button>
            <button aria-label="Закрыть"><svg width="11" height="11" viewBox="0 0 11 11"><path d="M2 1l7 9M9 1l-7 9" stroke="#eee" strokeWidth="2.200" /></svg></button>
          </ViewWindowButtons>
          <CubeArea>
            <CubeRing />
            <Compass $area="1 / 2">С</Compass>
            <Compass $area="2 / 1">З</Compass>
            <Cube>Верх</Cube>
            <Compass $area="2 / 3">В</Compass>
            <Compass $area="3 / 2">Ю</Compass>
          </CubeArea>
          <UcsPicker>МСК<svg width="9" height="6" viewBox="0 0 9 6"><path d="M1 1h7L4.500 5z" fill="none" stroke="#c3c6ce" /></svg></UcsPicker>
          <NavBar><NavIcons /></NavBar>
          <CommandArea>
            <History $tone={0}>Команда:</History>
            <History $tone={1}>Команда:</History>
            <History $tone={2}>Команда: *Прервано*</History>
            <CommandBar>
              <CommandGrip>
                <GripStart>
                  <svg width="6" height="18" viewBox="0 0 6 18"><path d="M1 0v18M5 0v18" stroke="#aaa" strokeWidth="2" strokeDasharray="2 1" /></svg>
                  <svg width="9" height="9" viewBox="0 0 9 9"><path d="M1 0l7 9M8 0L1 9" stroke="#ddd" strokeWidth="2" /></svg>
                </GripStart>
                <svg width="14" height="14" viewBox="0 0 14 14" fill="none" stroke="#d5d8dc"><path d="M5 5l7 8" strokeWidth="3" /><path d="M4 1c4-1 5 4 2 5-3 1-5-1-5-3l3 1z" strokeWidth="1.500" /></svg>
              </CommandGrip>
              <CommandField>
                <svg width="15" height="14" viewBox="0 0 15 14"><rect x=".5" y=".5" width="14" height="13" fill="#b4bfce" stroke="#76808d" /><path d="M3 4l3 3-3 3M7 11h5" stroke="#333f50" fill="none" /></svg>
                <Arrow color="#666" />
                <CommandInput aria-label="Команда" />
                <Arrow w={9} color="#111" up />
              </CommandField>
            </CommandBar>
          </CommandArea>
        </Canvas>

        <StatusRow>
          <LayoutTabs>
            <LayoutTab $active>Модель</LayoutTab>
            <LayoutTab>Layout1</LayoutTab>
            <LayoutTab>Layout2</LayoutTab>
            <PlusTab $flip aria-label="Новый лист"><Plus /></PlusTab>
          </LayoutTabs>
          <Hint>Нажмите ESC или ENTER для выхода, либо щелкните правой кнопкой мыши для вызова контекстного меню.</Hint>
        </StatusRow>
      </Window>
    </Page>
  );
}
